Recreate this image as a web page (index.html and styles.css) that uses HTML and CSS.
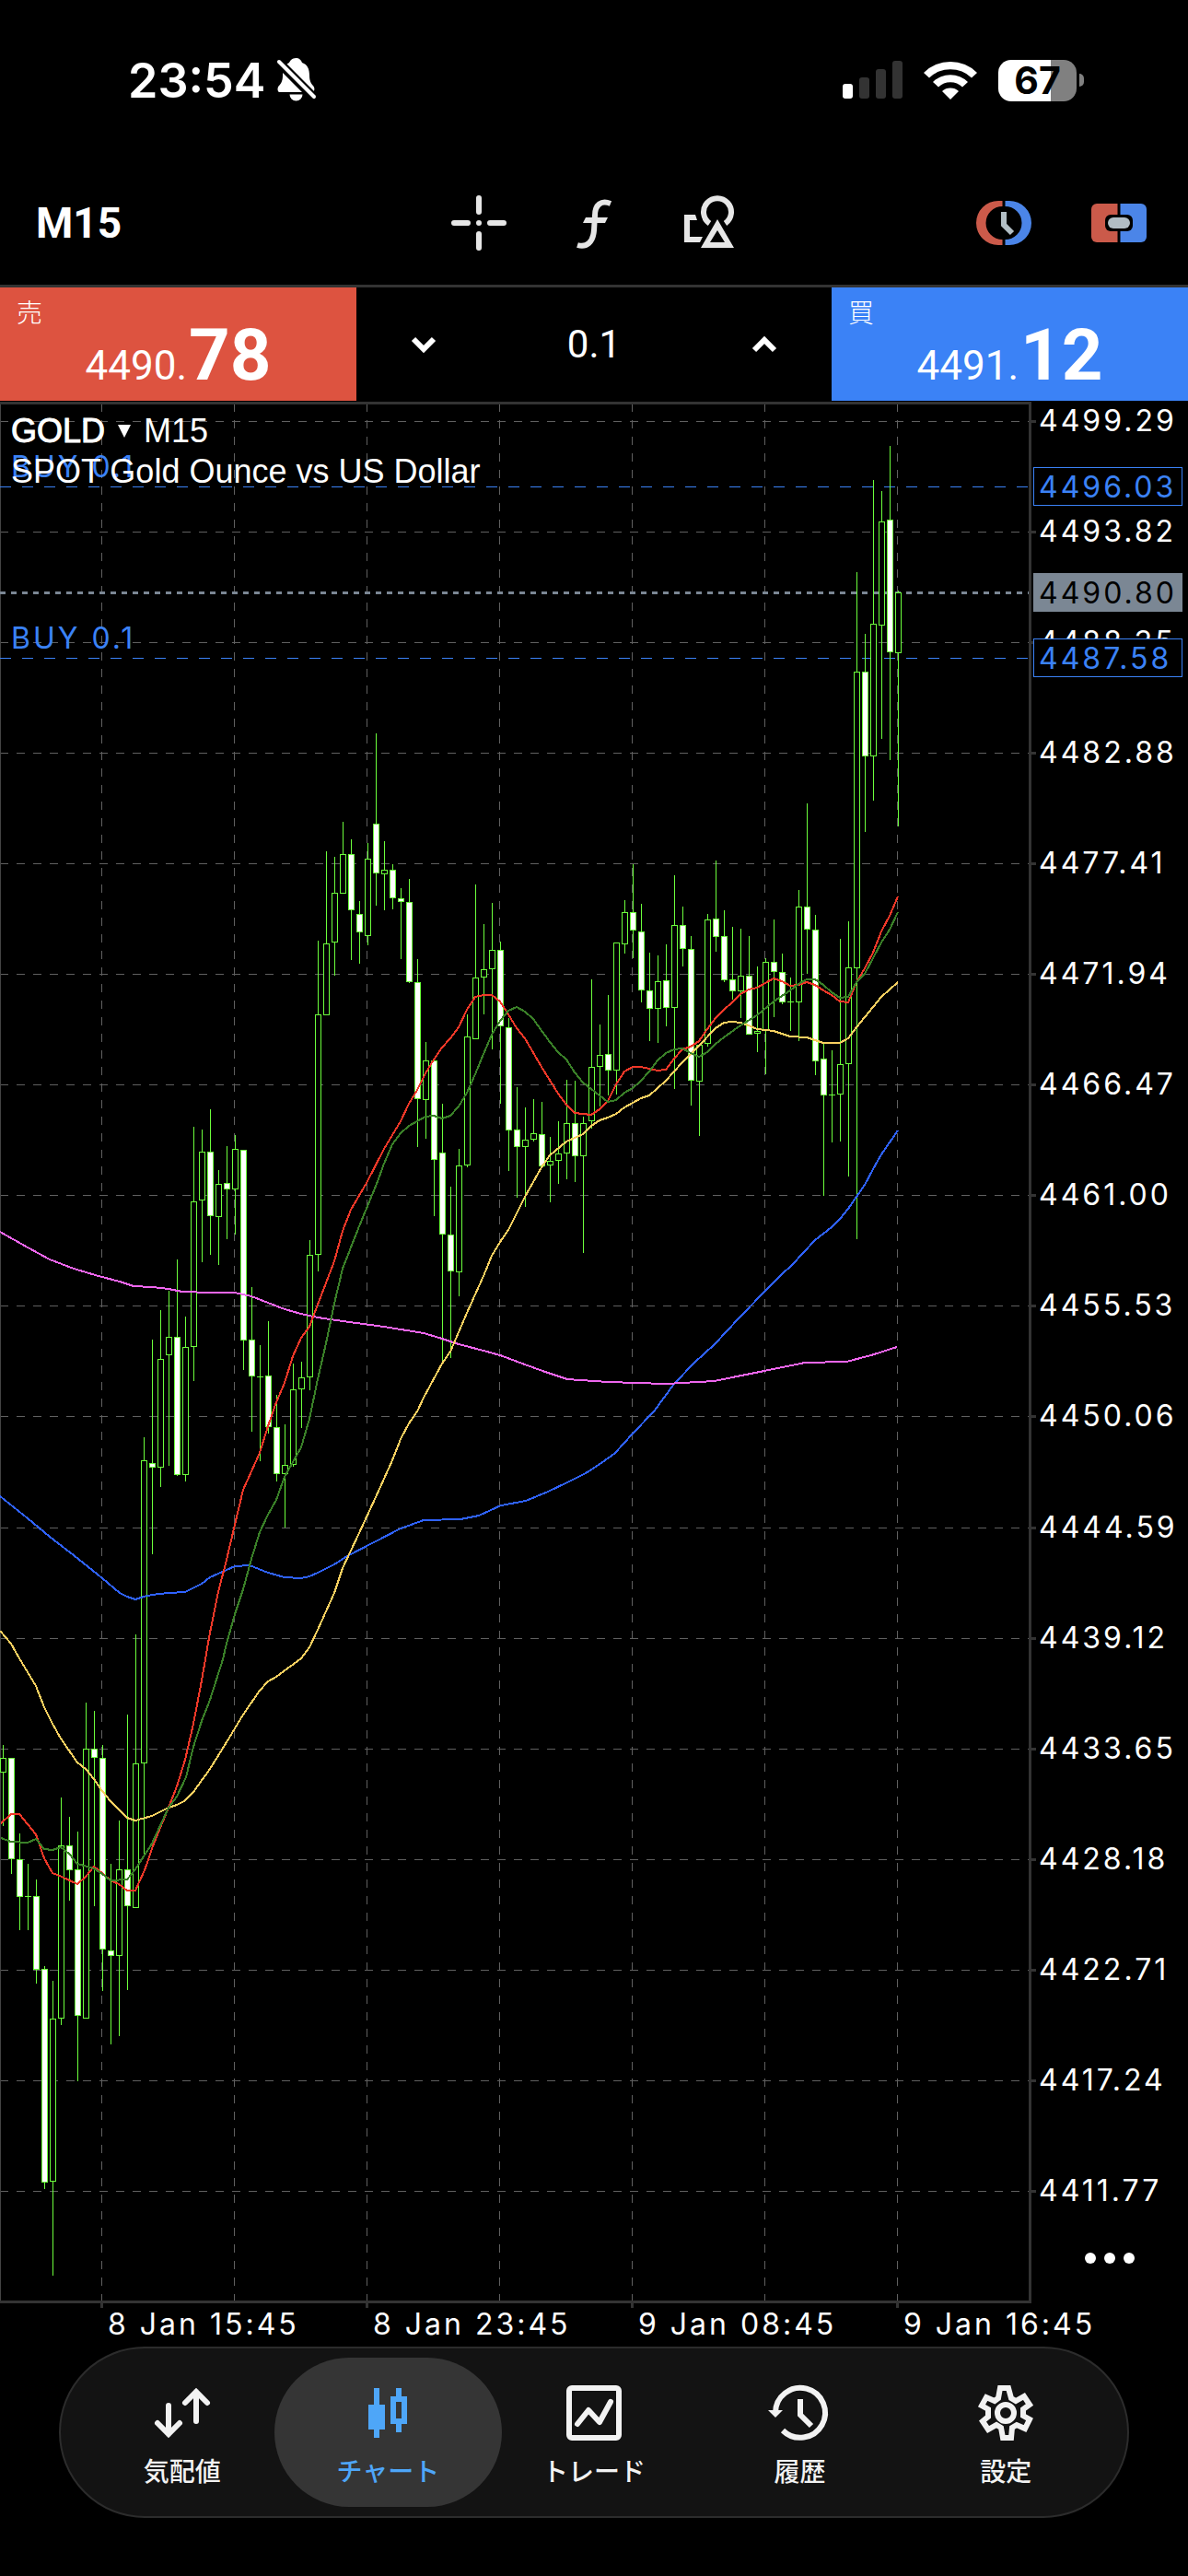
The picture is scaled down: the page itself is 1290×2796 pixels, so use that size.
FILE: index.html
```html
<!DOCTYPE html>
<html lang="ja">
  <head>
    <meta charset="utf-8">
    <meta name="viewport" content="width=device-width, initial-scale=1">
    <title>GOLD M15</title>
    <link rel="stylesheet" href="styles.css">
  </head>
  <body>
    <header>
      <div class="status">
        <div class="status-left">
          <span class="time">23:54</span>
          <svg width="44" height="48" viewBox="0 0 44 48" aria-hidden="true">
            <path fill="#fff" d="M21.500 0C17 0 15 3 14 5C8 8 7 14 7 19C7 25 5 28 3 30C1 32 1 36 3 37H39C42 37 42 32 40 30C38 28 36 25 36 19C36 12 34 7 28 5C27 2 25 0 21.500 0ZM14.500 39.500A7 7 0 0 0 28.500 39.500Z"/>
            <path stroke="#000" stroke-width="10" d="M-1 1L44 46"/>
            <path stroke="#fff" stroke-width="4" stroke-linecap="round" d="M3 4L41 42"/>
          </svg>
        </div>
        <div class="status-right">
          <svg width="65" height="42" viewBox="0 0 65 42" aria-hidden="true">
            <rect x="0" y="25" width="11" height="16" rx="3" fill="#fff"/>
            <rect x="18" y="18" width="11" height="23" rx="3" fill="#333"/>
            <rect x="36" y="9" width="11" height="32" rx="3" fill="#333"/>
            <rect x="54" y="0" width="11" height="41" rx="3" fill="#333"/>
          </svg>
          <svg width="58" height="42" viewBox="0 0 58 42" fill="#fff" aria-hidden="true">
            <path d="M0 13A41 41 0 0 1 58 13L52 18.500A33 33 0 0 0 6 18.500Z"/>
            <path d="M10 23A27 27 0 0 1 48 23L42 28.500A19 19 0 0 0 16 28.500Z"/>
            <path d="M20 33A13.500 13.500 0 0 1 38 33L29 42Z"/>
          </svg>
          <div class="battery">
            <span class="battery-level">67</span>
            <span class="battery-nub"></span>
          </div>
        </div>
      </div>

      <div class="toolbar">
        <button class="timeframe">M15</button>
        <div class="tools">
          <button aria-label="十字線">
            <svg viewBox="0 0 72 72">
              <path stroke="#e6e6e6" stroke-width="6" stroke-linecap="round" d="M36 9V24M36 48V63M9 36H24M48 36H63M36 36V36"/>
            </svg>
          </button>
          <button aria-label="インディケータ">
            <svg viewBox="0 0 72 72">
              <path fill="none" stroke="#e6e6e6" stroke-width="6" d="M54 15C44 11 37 16 37 28L36 44C35 57 28 63 18 60"/>
              <path fill="#e6e6e6" d="M27 30H51L48 36H24Z"/>
            </svg>
          </button>
          <button aria-label="オブジェクト">
            <svg viewBox="0 0 72 72">
              <path fill="none" stroke="#e6e6e6" stroke-width="6" d="M36.500 36.500A15 15 0 1 1 53.500 36.500"/>
              <path fill="#e6e6e6" d="M9 27H21L23 33H15V51H29L26 57H9Z"/>
              <path stroke="#000" stroke-width="5" d="M45 32L27 63H63Z"/>
              <path fill="#e6e6e6" fill-rule="evenodd" d="M45 32L63 63H27ZM45 44L37 57H53Z"/>
            </svg>
          </button>
        </div>
        <div class="tools-right">
          <button aria-label="注文">
            <svg viewBox="0 0 72 72">
              <path fill="#cb5a4a" d="M34.500 12H30A24 24 0 0 0 30 60H34.500V54A18 18 0 0 1 34.500 18Z"/>
              <path fill="#4b85e8" d="M37.500 12H42A24 24 0 0 1 42 60H37.500V54A18 18 0 0 0 37.500 18Z"/>
              <path fill="none" stroke="#b2bec5" stroke-width="6" d="M36 24V38L45 47"/>
            </svg>
          </button>
          <button aria-label="ワンクリック取引">
            <svg viewBox="0 0 72 72">
              <path fill="#cb5a4a" d="M34.500 15H12A6 6 0 0 0 6 21V51A6 6 0 0 0 12 57H34.500Z"/>
              <path fill="#4b85e8" d="M37.500 15H60A6 6 0 0 1 66 21V51A6 6 0 0 1 60 57H37.500Z"/>
              <rect x="21" y="27" width="30" height="18" rx="6"/>
              <rect x="24" y="30" width="24" height="12" rx="6" fill="#b2bec5"/>
            </svg>
          </button>
        </div>
      </div>
    </header>

    <main>
      <div class="trade">
        <button class="quote sell">
          <span class="side">売</span>
          <span class="price">4490.<b>78</b></span>
        </button>
        <div class="volume">
          <button aria-label="減らす">
            <svg viewBox="0 0 28 20"><path d="M3 4L14 15L25 4"/></svg>
          </button>
          <input type="text" value="0.1" aria-label="ロット">
          <button aria-label="増やす">
            <svg viewBox="0 0 28 20"><path d="M3 16L14 5L25 16"/></svg>
          </button>
        </div>
        <button class="quote buy">
          <span class="side">買</span>
          <span class="price">4491.<b>12</b></span>
        </button>
      </div>

      <div class="chart">
        <svg id="chart" viewBox="0 436 1290 2108" role="img" aria-label="GOLD M15"></svg>
        <div class="symbol">
          <button><strong>GOLD</strong><i class="caret"></i>M15</button>
          <p>SPOT Gold Ounce vs US Dollar</p>
        </div>
        <button class="more" aria-label="その他"><i></i><i></i><i></i></button>
      </div>
    </main>

    <nav>
      <a href="#quotes">
        <svg viewBox="0 0 72 72" fill="none" stroke="currentColor" stroke-width="6" stroke-linecap="round">
          <path d="M21 28V59M9 47L21 59L33 47M51 45V13M39 25L51 13L63 25"/>
        </svg>
        気配値
      </a>
      <a href="#chart" class="active">
        <svg viewBox="0 0 72 72" fill="currentColor">
          <path fill-rule="evenodd" d="M21 9H27V27H33V54H27V63H21V54H15V27H21ZM45 9H51V18H57V48H51V57H45V48H39V18H45ZM45 24V42H51V24Z"/>
        </svg>
        チャート
      </a>
      <a href="#trade">
        <svg viewBox="0 0 72 72" fill="none" stroke="currentColor" stroke-width="6" stroke-linecap="round">
          <rect x="9" y="9" width="54" height="54" rx="3"/>
          <path stroke-linejoin="round" d="M18 48L30 33L42 46L54 24"/>
        </svg>
        トレード
      </a>
      <a href="#history">
        <svg viewBox="0 0 72 72" fill="none" stroke="currentColor" stroke-width="6">
          <path d="M9 36A27 27 0 1 1 17 55M36 21V38L48 50"/>
          <path fill="currentColor" stroke="none" d="M1 33H17L9 41Z"/>
        </svg>
        履歴
      </a>
      <a href="#settings">
        <svg viewBox="0 0 72 72" fill="none" stroke="currentColor" stroke-width="6">
          <circle cx="36" cy="36" r="9"/>
          <path d="M30 9L39 9L42 20L47 23L56 18L62 27L55 32L55 39L62 43L57 53L48 49L43 52L42 63L33 63L31 52L26 49L17 54L11 45L17 40L17 32L10 28L15 19L24 23L28 20Z"/>
        </svg>
        設定
      </a>
    </nav>

    <script src="chart.js"></script>
  </body>
</html>
```
FILE: styles.css
```css
* {
  box-sizing: border-box;
}

body {
  margin: 0;
  background: #000;
  color: #fff;
  font-family: "Liberation Sans", "Noto Sans CJK JP", sans-serif;
}

button {
  margin: 0;
  padding: 0;
  border: 0;
  background: none;
  color: inherit;
  font: inherit;
  cursor: pointer;
}

svg {
  display: block;
}

/* status bar */
.status {
  display: flex;
  align-items: center;
  justify-content: space-between;
  height: 174px;
  padding: 0 113px 0 139px;
  font-family: Inter, sans-serif;
}

.status-left {
  display: flex;
  align-items: center;
  gap: 12px;
}

.time {
  font-size: 52px;
  font-weight: 600;
}

.status-right {
  display: flex;
  align-items: center;
  gap: 23px;
}

.battery {
  display: flex;
  align-items: center;
  gap: 3px;
}

.battery-level {
  width: 85px;
  border-radius: 14px;
  background: linear-gradient(to right, #fff 67%, #808080 67%);
  color: #000;
  font-size: 41px;
  font-weight: 700;
  line-height: 45px;
  text-align: center;
}

.battery-nub {
  width: 5px;
  height: 14px;
  border-radius: 0 6px 6px 0;
  background: #808080;
}

/* toolbar */
.toolbar {
  display: grid;
  grid-template-columns: 1fr auto 1fr;
  align-items: center;
  height: 138px;
  padding: 0 39px;
  border-bottom: 3px solid #333;
}

.timeframe {
  justify-self: start;
  font-family: Roboto, sans-serif;
  font-size: 46px;
  font-weight: bold;
}

.tools,
.tools-right {
  display: flex;
  gap: 53px;
}

.tools-right {
  justify-self: end;
}

.toolbar svg {
  width: 72px;
  height: 72px;
}

/* one click trading */
.trade {
  display: grid;
  grid-template-columns: 3fr 4fr 3fr;
  height: 124px;
  padding-bottom: 1px;
  font-family: Roboto, "Noto Sans CJK JP", sans-serif;
}

.quote {
  display: flex;
  flex-direction: column;
  align-items: flex-start;
  padding: 8px 18px;
}

.sell {
  background: #dd5340;
}

.buy {
  background: #3b82f6;
}

.side {
  font-family: "Noto Sans CJK JP", sans-serif;
  font-size: 28px;
  font-weight: 300;
  line-height: 36px;
}

.price {
  align-self: center;
  font-size: 44px;
  line-height: 60px;
}

.price b {
  margin-left: 2px;
  font-size: 78px;
  line-height: 60px;
}

.volume {
  display: flex;
  align-items: center;
  justify-content: space-between;
  padding: 0 59px;
}

.volume svg {
  width: 28px;
  height: 20px;
  fill: none;
  stroke: #fff;
  stroke-width: 6;
}

.volume input {
  width: 200px;
  border: 0;
  background: none;
  color: inherit;
  font-family: inherit;
  font-size: 42px;
  text-align: center;
}

/* chart */
.chart {
  position: relative;
}

#chart {
  width: 100%;
}

#chart text {
  font-family: Inter, sans-serif;
  font-size: 32px;
  letter-spacing: 3px;
  fill: #fff;
}

#chart .order-text {
  fill: #3b82f6;
}

#chart .bid-text {
  fill: #000;
}

.frame,
.grid,
.order,
.bid,
.candles,
.ma {
  shape-rendering: crispEdges;
  fill: none;
}

.frame {
  stroke: #333;
  stroke-width: 3;
}

.frame-left {
  stroke: #444;
  shape-rendering: crispEdges;
}

.grid {
  stroke: #606060;
  stroke-dasharray: 9 9;
}

.order {
  stroke: #3b82f6;
  stroke-dasharray: 12 12;
}

.bid {
  stroke: #7b8794;
  stroke-width: 3;
  stroke-dasharray: 6 6;
}

.tag {
  fill: #000;
  stroke: #3b82f6;
}

.bid-tag {
  fill: #7b8794;
}

.candles {
  stroke: #6cff3c;
}

.candles .up {
  fill: #000;
}

.candles .down {
  fill: #fff;
}

.ma {
  stroke-width: 2;
}

.symbol {
  position: absolute;
  top: 10px;
  left: 12px;
  font-size: 36px;
  line-height: 44px;
}

.symbol button {
  display: flex;
  align-items: center;
}

.symbol strong {
  font-weight: normal;
  -webkit-text-stroke: 1px #fff;
}

.symbol p {
  margin: 0;
}

.caret {
  margin: 0 14px;
  border: 7px solid transparent;
  border-top: 14px solid #fff;
  border-bottom: 0;
}

.more {
  position: absolute;
  right: 58px;
  bottom: 87px;
  display: flex;
  gap: 9px;
}

.more i {
  width: 12px;
  height: 12px;
  border-radius: 50%;
  background: #fff;
}

/* tab bar */
nav {
  display: flex;
  margin: 3px 64px 63px;
  padding: 10px 20px;
  border: 2px solid #2c2c2c;
  border-radius: 93px;
  background: #131313;
}

nav a {
  display: flex;
  flex: 1;
  flex-direction: column;
  align-items: center;
  gap: 8px;
  height: 162px;
  margin: 0 -12px;
  padding-top: 24px;
  border-radius: 81px;
  color: #f2f2f2;
  font-family: "Noto Sans CJK JP", sans-serif;
  font-size: 28px;
  font-weight: 500;
  line-height: 36px;
  text-decoration: none;
}

nav .active {
  background: #353535;
  color: #4ea6f8;
}

nav svg {
  width: 72px;
  height: 72px;
}
```
FILE: chart.js
```js
const chart = document.querySelector('#chart');

// one row per bar: high, open, close, low (y on the chart)
const bars = [
  [1894,1923,1908,1982],[1908,1908,2017,2034],[1990,2018,2058,2095],[2023,2058,2058,2095],
  [2040,2058,2137,2153],[2134,2137,2368,2376],[2150,2367,2191,2470],[1951,2190,2003,2198],
  [1972,2003,2029,2063],[1988,2029,2187,2259],[1848,2190,1898,2190],[1857,1898,1907,2069],
  [1894,1908,2115,2161],[2023,2117,2122,2219],[1976,2122,2029,2210],[1861,2029,2068,2160],
  [1774,2070,1914,2070],[1560,1913,1585,2016],[1454,1588,1592,1687],[1422,1592,1475,1614],
  [1401,1470,1451,1591],[1367,1451,1600,1602],[1429,1600,1462,1608],[1223,1461,1304,1499],
  [1226,1302,1250,1370],[1204,1250,1319,1362],[1270,1320,1285,1373],[1244,1284,1290,1345],
  [1232,1290,1247,1340],[1248,1248,1454,1487],[1397,1454,1493,1554],[1460,1494,1494,1586],
  [1434,1493,1548,1556],[1514,1549,1599,1608],[1546,1599,1590,1658],[1480,1589,1508,1592],
  [1478,1507,1495,1550],[1346,1494,1362,1509],[1021,1361,1101,1380],[924,1101,1024,1101],
  [930,1022,969,1059],[892,969,927,969],[911,927,987,1042],[978,992,1011,1046],
  [915,1015,932,1026],[796,894,947,983],[913,948,944,988],[938,944,974,987],
  [964,975,978,1041],[954,979,1065,1067],[1041,1066,1192,1245],[1131,1193,1151,1236],
  [1151,1151,1258,1320],[1198,1251,1339,1478],[1288,1340,1379,1474],[1247,1380,1265,1407],
  [1101,1264,1125,1267],[960,1127,1061,1127],[1003,1060,1052,1101],[980,1051,1031,1139],
  [1022,1031,1113,1198],[1105,1115,1226,1271],[1180,1226,1244,1300],[1202,1244,1237,1310],
  [1193,1236,1230,1239],[1196,1231,1265,1265],[1234,1264,1260,1305],[1217,1259,1252,1285],
  [1172,1251,1219,1280],[1173,1219,1254,1283],[1212,1254,1219,1360],[1063,1216,1158,1225],
  [1112,1157,1145,1201],[1080,1144,1161,1189],[1023,1161,1023,1188],[977,1024,990,1035],
  [938,990,1009,1040],[981,1011,1074,1088],[1034,1075,1094,1130],[1037,1094,1065,1132],
  [1025,1064,1093,1114],[950,1093,1004,1182],[984,1004,1029,1049],[1016,1030,1172,1200],
  [1133,1173,1134,1233],[992,1132,998,1136],[934,997,1016,1033],[988,1016,1063,1066],
  [1006,1063,1075,1085],[1008,1075,1059,1105],[1016,1059,1122,1122],[1049,1121,1119,1142],
  [1040,1118,1044,1166],[998,1044,1054,1104],[1035,1055,1087,1090],[1061,1087,1087,1119],
  [966,1087,984,1130],[872,984,1008,1057],[993,1009,1151,1167],[1132,1149,1188,1298],
  [1140,1188,1188,1240],[1019,1187,1155,1239],[1000,1154,1050,1277],[621,1050,729,1345],
  [688,729,820,903],[521,820,677,869],[533,678,566,802],[484,564,707,825],[641,708,643,897]
];

const averages = [
  ['#2f62ff', '0,1624 30,1648 54,1668 85,1692 111,1713 130,1729 138,1733 147,1736 156,1733 165,1731 183,1729 201,1728 219,1719 228,1712 246,1704 255,1700 271,1699 291,1707 309,1712 327,1713 336,1711 345,1707 363,1698 377,1689 408,1673 435,1659 460,1650 500,1649 520,1645 544,1634 571,1629 595,1619 616,1609 636,1599 653,1588 668,1577 687,1556 710,1532 732,1502 754,1479 776,1459 803,1430 832,1400 849,1383 860,1373 885,1346 903,1332 912,1323 921,1312 930,1299 939,1286 948,1269 957,1253 975,1227'],
  ['#ee66ee', '0,1337 30,1354 54,1367 80,1377 107,1385 130,1391 145,1396 165,1397 183,1399 198,1402 230,1403 255,1403 273,1407 291,1414 309,1421 327,1426 345,1430 372,1434 417,1440 460,1447 480,1453 498,1459 525,1466 543,1471 567,1480 592,1489 616,1497 660,1500 723,1502 776,1499 800,1494 830,1488 874,1479 919,1478 946,1471 974,1462'],
  ['#f8d060', '0,1770 12,1784 21,1800 39,1830 48,1853 57,1871 66,1887 84,1913 93,1920 102,1931 111,1944 120,1955 138,1973 147,1976 165,1971 183,1962 192,1959 200,1955 210,1945 228,1920 246,1891 264,1861 282,1835 291,1825 300,1820 327,1800 336,1788 345,1769 363,1729 372,1702 390,1664 408,1625 426,1585 435,1562 444,1545 453,1532 460,1517 480,1480 489,1467 498,1446 507,1425 525,1385 534,1363 543,1348 552,1335 561,1317 570,1299 588,1267 597,1254 615,1239 633,1231 642,1222 651,1216 660,1213 669,1209 678,1202 696,1192 705,1189 723,1173 741,1153 759,1135 777,1116 786,1110 795,1109 804,1110 813,1113 822,1117 840,1119 858,1125 876,1126 894,1132 912,1132 921,1127 930,1115 939,1104 957,1082 975,1066'],
  ['#f03828', '1,1979 12,1969 21,1969 39,1991 48,2017 57,2033 67,2037 84,2045 93,2037 102,2026 111,2033 120,2041 129,2045 138,2052 147,2052 157,2030 167,2001 183,1962 192,1939 201,1910 210,1871 219,1824 228,1772 237,1728 246,1693 255,1655 264,1617 282,1577 291,1548 300,1522 309,1501 318,1472 327,1452 336,1440 345,1416 363,1369 372,1336 381,1313 398,1284 417,1247 435,1217 444,1198 453,1183 462,1165 471,1150 480,1137 489,1127 498,1115 507,1096 516,1082 525,1080 534,1080 543,1087 552,1101 561,1116 570,1127 588,1158 606,1187 615,1199 624,1208 642,1210 651,1204 660,1195 669,1177 678,1163 687,1158 696,1158 714,1162 723,1161 732,1149 741,1139 750,1136 759,1130 768,1117 777,1105 786,1096 795,1088 804,1079 813,1074 822,1072 831,1067 840,1062 849,1065 858,1070 867,1069 876,1066 885,1069 894,1075 903,1080 912,1087 921,1088 930,1066 939,1051 948,1034 957,1011 966,994 975,973'],
  ['#3a8028', '1,1995 12,1999 30,2000 39,1996 48,2007 57,2008 66,2005 75,2012 84,2023 102,2028 111,2034 120,2041 138,2040 147,2029 165,2001 183,1962 192,1950 202,1929 210,1896 219,1868 228,1845 242,1801 246,1784 255,1752 264,1725 273,1692 282,1663 291,1644 300,1628 309,1603 327,1571 336,1540 345,1497 354,1458 363,1415 372,1377 390,1331 409,1285 417,1263 426,1242 435,1230 444,1222 462,1212 471,1211 480,1214 489,1211 498,1201 507,1186 516,1166 525,1144 534,1123 543,1108 552,1097 561,1093 570,1098 579,1106 597,1131 606,1142 615,1150 624,1164 633,1175 642,1182 651,1189 660,1196 669,1194 678,1186 687,1181 696,1173 705,1163 714,1151 723,1143 732,1139 741,1138 750,1143 759,1147 768,1142 777,1133 786,1126 804,1113 822,1102 840,1087 858,1075 867,1068 876,1063 885,1063 894,1069 903,1077 912,1083 921,1082 930,1066 939,1057 948,1040 957,1023 966,1009 975,990']
];

const dates = [[110, '8 Jan 15:45'], [398, '8 Jan 23:45'], [686, '9 Jan 08:45'], [974, '9 Jan 16:45']];

let svg = '';

// grid and price scale
for (let x = 110; x < 1117; x += 144) {
  svg += `<path class="grid" d="M${x + 0.5} 438V2497"/>`;
}
for (let i = 0; i < 17; i++) {
  const y = Math.round(456.5 + i * 120.1);
  const price = (4499.29 - i * 5.47).toFixed(2);
  svg += `<path class="grid" d="M0 ${y + 0.5}H1117"/>`;
  svg += `<path class="frame" d="M1120 ${y + 0.5}H1125"/>`;
  svg += `<text x="1128" y="${y + 11}">${price}</text>`;
}

// frame and time scale
svg += '<path class="frame-left" d="M0.5 438V2497"/>';
svg += '<path class="frame" d="M0 437.5H1118.5V2498.5H0"/>';
dates.forEach(([x, label]) => {
  svg += `<path class="frame" d="M${x + 0.5} 2500V2505"/>`;
  svg += `<text x="${x + 7}" y="2534">${label}</text>`;
});

// orders and bid
[[528, '4496.03'], [714, '4487.58']].forEach(([y, price]) => {
  svg += `<path class="order" d="M0 ${y + 0.5}H1117"/>`;
  svg += `<text class="order-text" x="12" y="${y - 10}">BUY 0.1</text>`;
  svg += `<rect class="tag" x="1122.5" y="${y - 20.5}" width="161" height="41"/>`;
  svg += `<text class="order-text" x="1128" y="${y + 12}">${price}</text>`;
});
svg += '<path class="bid" d="M0 643.5H1117"/>';
svg += '<rect class="bid-tag" x="1122" y="622" width="162" height="42"/>';
svg += '<text class="bid-text" x="1128" y="655">4490.80</text>';

// candles
svg += '<g class="candles">';
bars.forEach(([high, open, close, low], i) => {
  const x = 3.5 + i * 9;
  const top = Math.min(open, close);
  const height = Math.abs(open - close);
  svg += `<path d="M${x} ${high}V${low}"/>`;
  if (height === 0) {
    svg += `<path d="M${x - 3.5} ${top + 0.5}h7"/>`;
  } else {
    svg += `<rect class="${close > open ? 'down' : 'up'}" x="${x - 3}" y="${top + 0.5}" width="6" height="${height}"/>`;
  }
});
svg += '</g>';

averages.forEach(([color, points]) => {
  svg += `<polyline class="ma" stroke="${color}" points="${points}"/>`;
});

chart.innerHTML = svg;
```
